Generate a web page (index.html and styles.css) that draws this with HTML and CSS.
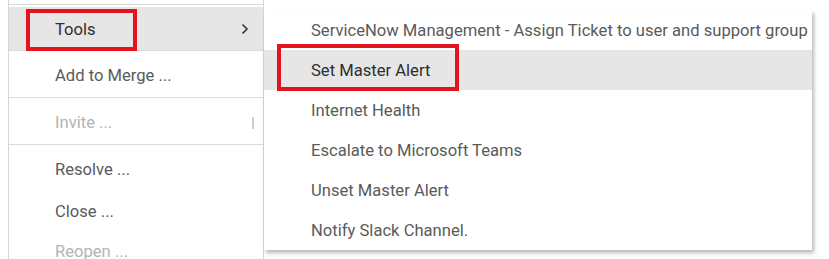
FILE: index.html
```html
<!DOCTYPE html>
<html lang="en">
<head>
  <meta charset="UTF-8" />
  <title>Tools menu</title>
  <link rel="stylesheet" href="styles.css">
</head>
<body>
  <div class="stage">
    <ul class="menu">
      <li class="menu__sep"></li>
      <li class="menu__item menu__item--open">
        <span>Tools</span>
        <svg class="chevron" width="8" height="12" viewBox="0 0 8 12"><polyline points="1.5,1.5 6,6 1.5,10.5" fill="none" stroke="#333" stroke-width="1.6"/></svg>
      </li>
      <li class="menu__sep"></li>
      <li class="menu__item menu__item--lead">Add to Merge ...</li>
      <li class="menu__sep"></li>
      <li class="menu__item menu__item--lead menu__item--disabled">
        <span>Invite ...</span>
        <span class="caret"></span>
      </li>
      <li class="menu__sep"></li>
      <li class="menu__item menu__item--lead">Resolve ...</li>
      <li class="menu__item">Close ...</li>
      <li class="menu__item menu__item--disabled">Reopen ...</li>
    </ul>

    <ul class="submenu">
      <li class="submenu__item">ServiceNow Management - Assign Ticket to user and support group</li>
      <li class="submenu__item submenu__item--hover">Set Master Alert</li>
      <li class="submenu__item">Internet Health</li>
      <li class="submenu__item">Escalate to Microsoft Teams</li>
      <li class="submenu__item">Unset Master Alert</li>
      <li class="submenu__item">Notify Slack Channel.</li>
    </ul>

    <!-- red callout boxes drawn over the screenshot -->
    <div class="callout callout--tools"></div>
    <div class="callout callout--alert"></div>
  </div>
</body>
</html>
```

FILE: styles.css
```css
body {
  margin: 0;
  background: #fff;
  font-family: Roboto, "Noto Sans", sans-serif;
  font-size: 16.6px;
  color: #5a5a5a;
  overflow: hidden;
}

ul {
  list-style: none;
  margin: 0;
  padding: 0;
}

.stage {
  position: relative;
  width: 829px;
  height: 259px;
  overflow: hidden;
}

.menu {
  width: 254px;
  margin-left: 8px;
  padding-top: 4px;
  border-left: 1px solid #d6d6d6;
  border-right: 1px solid #d6d6d6;
  background: #fff;
}

.menu__item {
  box-sizing: border-box;
  display: flex;
  align-items: center;
  justify-content: space-between;
  height: 40px;
  padding: 1px 13px 0 46px;
}

.menu__item--lead {
  height: 44px;
}

.menu__sep {
  height: 1px;
  margin-bottom: 2px;
  background: #dcdcdc;
}

.menu__item--open {
  height: 43px;
  margin-bottom: -2px;
  background: #e6e6e6;
  color: #2e2e2e;
}

.menu__item--open + .menu__sep {
  margin-top: 2px;
}

.menu__item--disabled {
  color: #b3b3b3;
}

.chevron {
  margin-right: 1px;
}

.caret {
  width: 2px;
  height: 12px;
  margin-right: -4px;
  background: #cfcfcf;
}

.submenu {
  position: absolute;
  top: 10px;
  left: 264px;
  width: 548px;
  background: #fff;
  box-shadow: 2px 3px 4px rgba(0, 0, 0, 0.28);
}

.submenu__item {
  height: 38px;
  padding: 2px 0 0 47px;
  line-height: 38px;
  white-space: nowrap;
}

.submenu__item--hover {
  background: #e6e6e6;
  color: #2e2e2e;
}

.callout {
  position: absolute;
  border: 4px solid #e3141d;
}

.callout--tools {
  top: 9px;
  left: 26px;
  width: 103px;
  height: 34px;
}

.callout--alert {
  top: 44px;
  left: 277px;
  width: 174px;
  height: 39px;
}
```
